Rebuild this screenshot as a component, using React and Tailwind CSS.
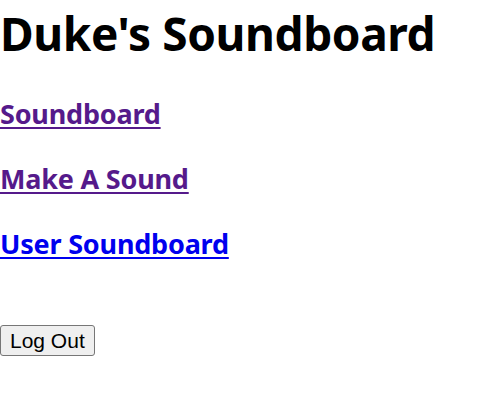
export default function App() {
  const links = [
    { label: "Soundboard", visited: true },
    { label: "Make A Sound", visited: true },
    { label: "User Soundboard", visited: false },
  ];

  return (
    <div className="min-h-[400px] w-[500px] bg-white text-black" style={{ fontFamily: '"Noto Sans", "Open Sans", sans-serif' }}>
      <h1 className="text-[46px] font-bold leading-[66px] tracking-[-0.4px]">Duke's Soundboard</h1>
      <div className="mt-[29px] flex flex-col gap-[28px]">
        {links.map((l) => (
          <h3 key={l.label} className="text-[27px] font-bold leading-[37px] tracking-[-0.2px]">
            <a
              href="#"
              className={`underline decoration-2 underline-offset-[3px] ${l.visited ? "text-[#551a8b]" : "text-[#0000ee]"}`}
            >
              {l.label}
            </a>
          </h3>
        ))}
      </div>
      <div className="mt-[63px]">
        <button
          className="h-[31px] rounded-[3px] border border-[#767676] bg-[#efefef] px-[9px] text-[21px] leading-[24px] text-black"
          style={{ fontFamily: '"Liberation Sans", Arial, sans-serif' }}
        >
          Log Out
        </button>
      </div>
    </div>
  );
}
